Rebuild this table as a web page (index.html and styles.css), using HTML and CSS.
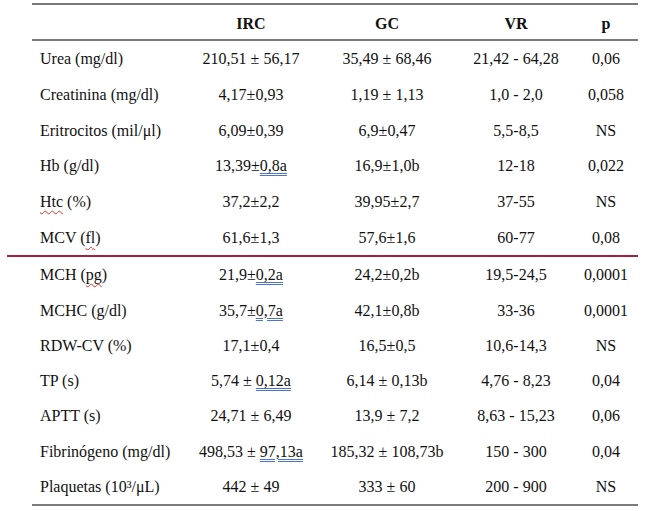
FILE: index.html
```html
<!DOCTYPE html>
<html lang="es">
<head>
<meta charset="utf-8">
<title>Tabla</title>
<link rel="stylesheet" href="styles.css">
</head>
<body>
<div class="page">
  <div class="block top">
    <div class="row head">
      <div class="label"></div>
      <div>IRC</div>
      <div>GC</div>
      <div>VR</div>
      <div>p</div>
    </div>
    <div class="row"><div class="label">Urea (mg/dl)</div><div>210,51 ± 56,17</div><div>35,49 ± 68,46</div><div>21,42 - 64,28</div><div>0,06</div></div>
    <div class="row"><div class="label">Creatinina (mg/dl)</div><div>4,17±0,93</div><div>1,19 ± 1,13</div><div>1,0 - 2,0</div><div>0,058</div></div>
    <div class="row"><div class="label">Eritrocitos (mil/μl)</div><div>6,09±0,39</div><div>6,9±0,47</div><div>5,5-8,5</div><div>NS</div></div>
    <div class="row"><div class="label">Hb (g/dl)</div><div>13,39±<span class="gram">0,8a</span></div><div>16,9±1,0b</div><div>12-18</div><div>0,022</div></div>
    <div class="row"><div class="label"><span class="spell">Htc</span> (%)</div><div>37,2±2,2</div><div>39,95±2,7</div><div>37-55</div><div>NS</div></div>
    <div class="row"><div class="label">MCV (<span class="spell">fl</span>)</div><div>61,6±1,3</div><div>57,6±1,6</div><div>60-77</div><div>0,08</div></div>
  </div>
  <div class="red-rule"></div>
  <div class="block bottom">
    <div class="row"><div class="label">MCH (<span class="spell">pg</span>)</div><div>21,9±<span class="gram">0,2a</span></div><div>24,2±0,2b</div><div>19,5-24,5</div><div>0,0001</div></div>
    <div class="row"><div class="label">MCHC (g/dl)</div><div>35,7±<span class="gram">0,7a</span></div><div>42,1±0,8b</div><div>33-36</div><div>0,0001</div></div>
    <div class="row"><div class="label">RDW-CV (%)</div><div>17,1±0,4</div><div>16,5±0,5</div><div>10,6-14,3</div><div>NS</div></div>
    <div class="row"><div class="label">TP (s)</div><div>5,74 ± <span class="gram">0,12a</span></div><div>6,14 ± 0,13b</div><div>4,76 - 8,23</div><div>0,04</div></div>
    <div class="row"><div class="label">APTT (s)</div><div>24,71 ± 6,49</div><div>13,9 ± 7,2</div><div>8,63 - 15,23</div><div>0,06</div></div>
    <div class="row"><div class="label">Fibrinógeno (mg/dl)</div><div>498,53 ± <span class="gram">97,13a</span></div><div>185,32 ± 108,73b</div><div>150 - 300</div><div>0,04</div></div>
    <div class="row"><div class="label">Plaquetas (10³/μL)</div><div>442 ± 49</div><div>333 ± 60</div><div>200 - 900</div><div>NS</div></div>
  </div>
</div>
</body>
</html>
```
FILE: styles.css
```css
html, body {
  margin: 0;
  padding: 0;
  background: #ffffff;
}

body {
  font-family: "Liberation Serif", "Times New Roman", serif;
  font-size: 16px;
  color: #111111;
}

.page {
  width: 631px;
  margin-left: 7px;
  padding-top: 3px;
}

.block {
  margin-left: 25px;
}

.top {
  border-top: 2px solid #7a7a7a;
}

.bottom {
  border-bottom: 2px solid #7a7a7a;
}

.row {
  display: grid;
  grid-template-columns: 154px 130px 142px 116px 64px;
  align-items: center;
  height: 35.7px;
  padding-top: 1px;
  box-sizing: border-box;
  text-align: center;
  white-space: nowrap;
}

.bottom .row {
  height: 35.3px;
}

.row .label {
  text-align: left;
  padding-left: 8px;
}

.head {
  height: 36px;
  padding-top: 3px;
  font-weight: bold;
  border-bottom: 2px solid #7a7a7a;
}

.red-rule {
  height: 2px;
  background: #a3203f;
}

.gram {
  text-decoration: underline double #4a74c9;
  text-decoration-thickness: 1px;
  text-underline-offset: 2px;
}

.spell {
  text-decoration: underline wavy #e0302a;
  text-decoration-thickness: 1px;
  text-underline-offset: 3px;
}
```
